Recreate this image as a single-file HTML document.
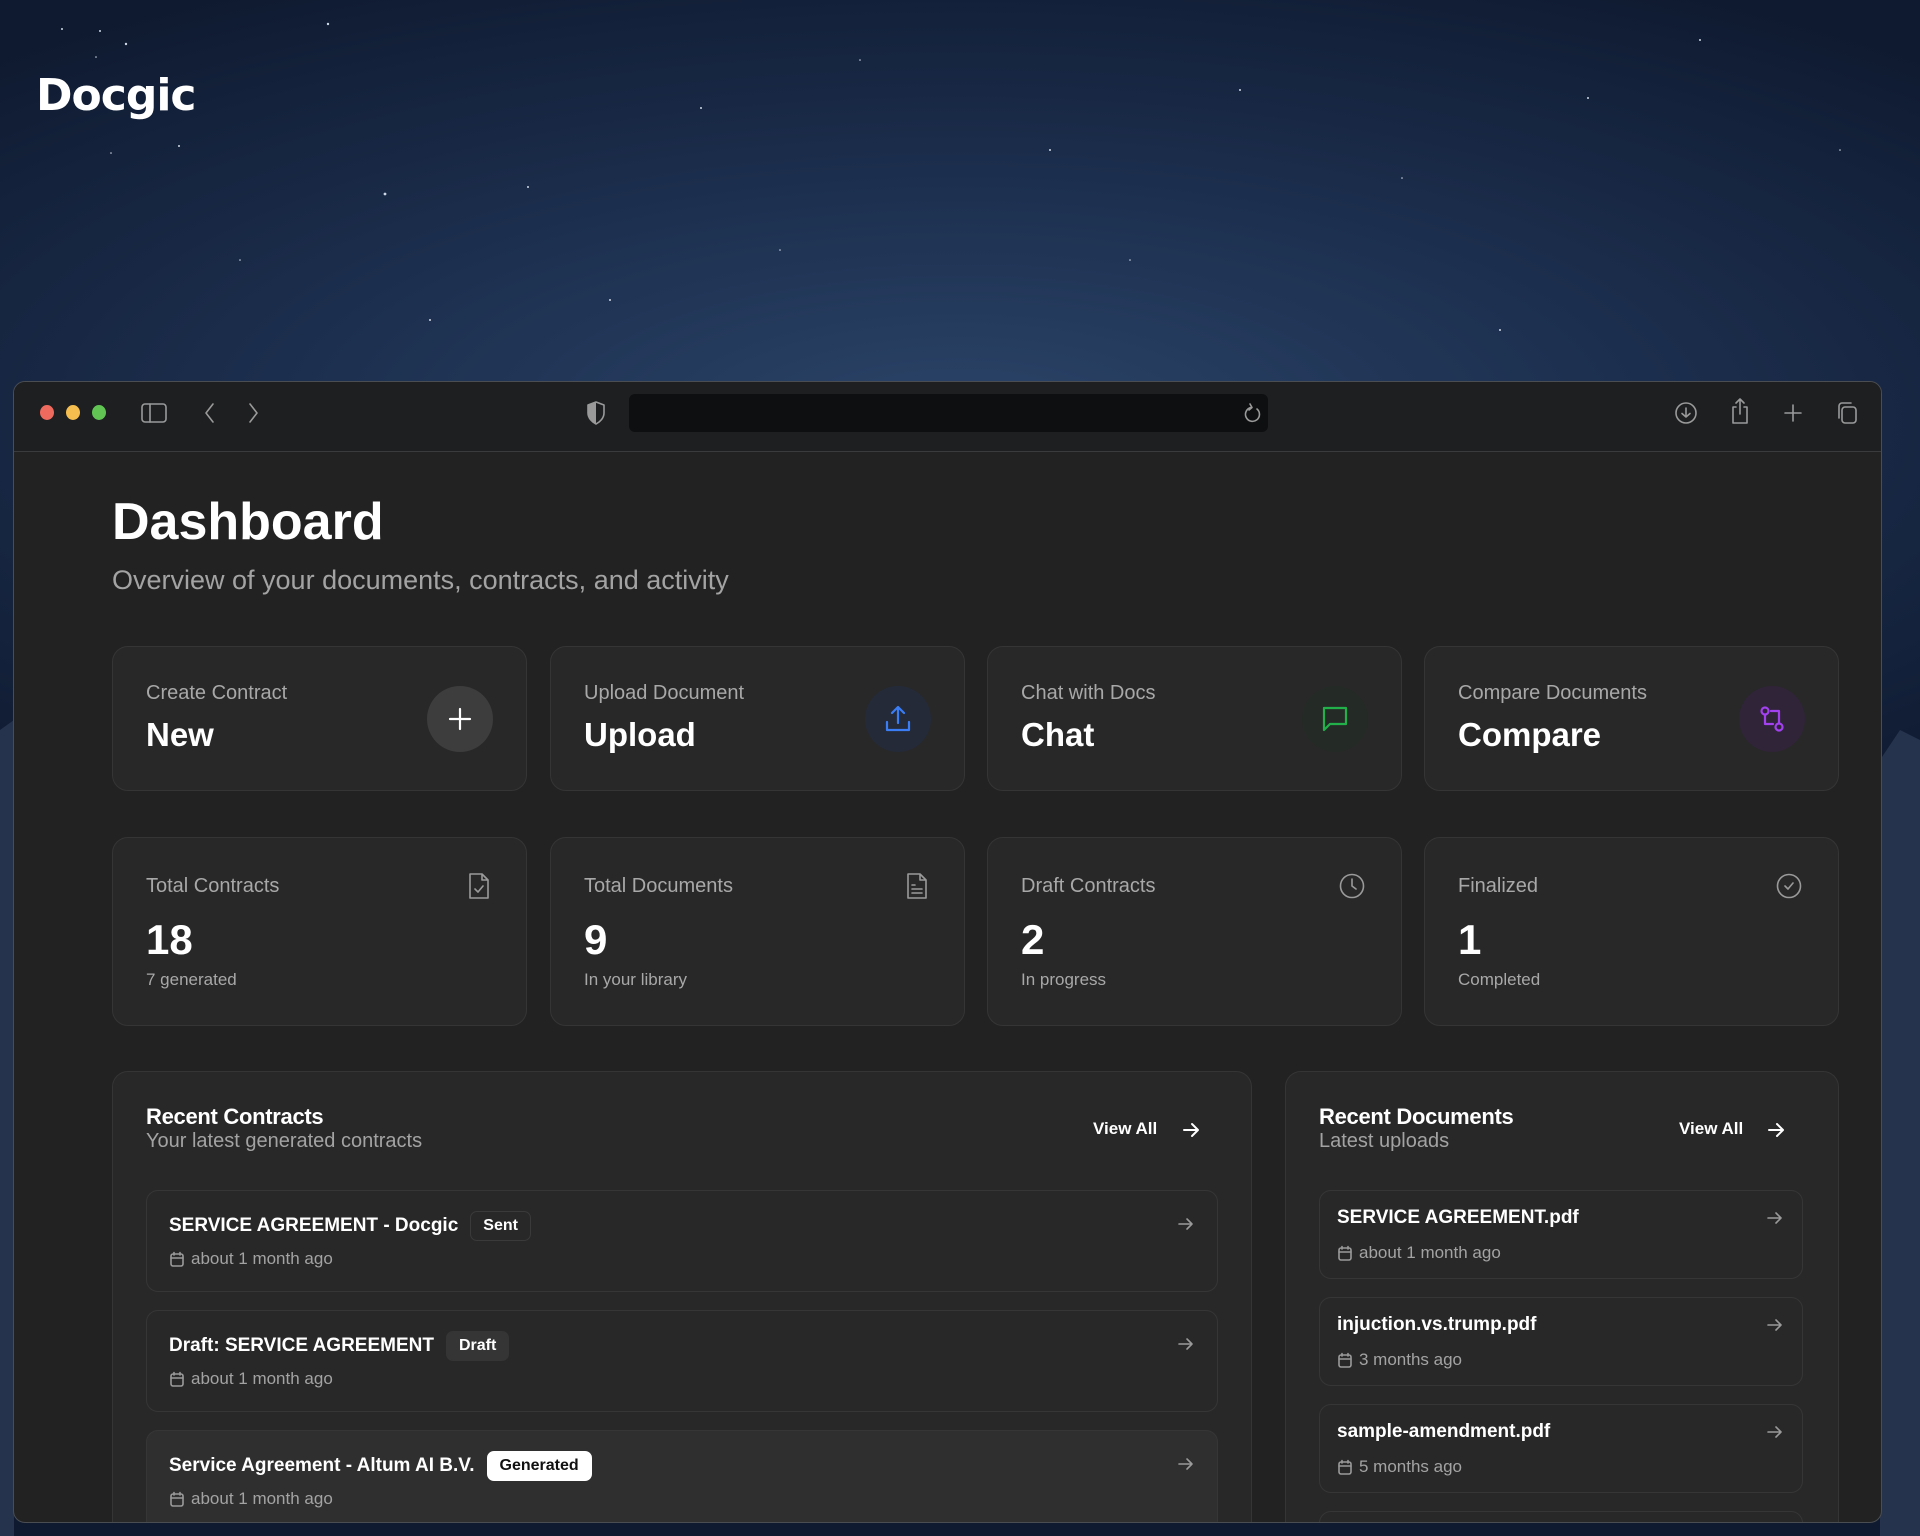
<!DOCTYPE html>
<html><head><meta charset="utf-8"><style>
*{box-sizing:border-box;margin:0;padding:0}
body{width:1920px;height:1536px;overflow:hidden;font-family:"Liberation Sans",sans-serif;position:relative;
background:radial-gradient(ellipse 1400px 500px at 50% 420px,#2b4468 0%,#1d3050 45%,#0f1a30 100%);}
.abs{position:absolute}
.logo{left:36px;top:70px;color:#fff;font-size:44px;font-weight:900;letter-spacing:-1px;font-family:"DejaVu Sans","Liberation Sans",sans-serif}
.win{left:13px;top:381px;width:1869px;height:1142px;background:#222222;border-radius:12px;border:1px solid #4a4d52;overflow:hidden}
.tb{left:0;top:0;width:100%;height:70px;background:#1d1f21;border-bottom:1px solid #3a3b3d}
.dot{width:14px;height:15px;border-radius:50%;top:23px}
.url{left:615px;top:12px;width:639px;height:38px;background:#0d0f11;border-radius:6px}
.ic{stroke:#9a9a9a;fill:none;stroke-width:1.6;stroke-linecap:round;stroke-linejoin:round}
h1{left:98px;top:110px;font-size:52px;font-weight:700;color:#fff;position:absolute}
.sub{left:98px;top:183px;font-size:27px;color:#a3a3a3}
.card{background:#282828;border:1px solid #353535;border-radius:16px;position:absolute}
.lab{font-size:20px;color:#a8a8a8;position:absolute;left:33px}
.big{font-size:33px;font-weight:700;color:#fff;position:absolute;left:33px}
.circ{position:absolute;width:66px;height:66px;border-radius:50%;left:314px;top:39px;display:flex;align-items:center;justify-content:center}
.num{font-size:42px;font-weight:700;color:#fff;position:absolute;left:33px;top:78px}
.small{font-size:17px;color:#a8a8a8;position:absolute;left:33px;top:132px}
.sicon{position:absolute;left:354px;top:34px}
.pt{font-size:22px;font-weight:700;color:#fff;position:absolute;left:33px;top:32px;letter-spacing:-0.3px}
.ps{font-size:20px;color:#a3a3a3;position:absolute;left:33px;top:58px}
.va{position:absolute;top:47px;font-size:17px;font-weight:700;color:#fff}
.item{position:absolute;background:#282828;border:1px solid #363636;border-radius:12px}
.it{position:absolute;left:22px;font-size:19px;font-weight:700;color:#fff;display:flex;align-items:center}
.badge{margin-left:12px;font-size:16px;font-weight:700;padding:5px 12px;border-radius:7px;border:1px solid #3a3a3a;color:#fff}
.dt{position:absolute;left:22px;font-size:17px;color:#a3a3a3;display:flex;align-items:center;gap:6px}
.arr{position:absolute;right:22px}
</style></head><body>
<svg class="abs" style="left:0;top:0" width="1920" height="380">
<g fill="#cfd8e6"><circle cx="62" cy="29" r="1"/><circle cx="100" cy="31" r="1"/><circle cx="126" cy="44" r="1.2"/><circle cx="96" cy="57" r=".8"/><circle cx="328" cy="24" r="1.2"/><circle cx="385" cy="194" r="1.4"/><circle cx="179" cy="146" r="1"/><circle cx="111" cy="153" r=".8"/><circle cx="528" cy="187" r="1"/><circle cx="701" cy="108" r="1"/><circle cx="860" cy="60" r=".8"/><circle cx="1050" cy="150" r="1"/><circle cx="1240" cy="90" r="1"/><circle cx="1402" cy="178" r=".8"/><circle cx="1588" cy="98" r="1"/><circle cx="1700" cy="40" r="1"/><circle cx="1840" cy="150" r=".8"/><circle cx="610" cy="300" r="1"/><circle cx="1130" cy="260" r=".8"/><circle cx="430" cy="320" r="1"/><circle cx="1500" cy="330" r="1"/><circle cx="240" cy="260" r=".8"/><circle cx="780" cy="250" r=".8"/></g>
</svg>
<svg class="abs" style="left:1880px;top:700px" width="40" height="836"><path d="M0 60 L20 30 L40 40 L40 836 L0 836Z" fill="#26334d"/></svg>
<svg class="abs" style="left:0;top:700px" width="14" height="836"><path d="M0 30 L14 20 L14 836 L0 836Z" fill="#26334d"/></svg>
<div class="abs logo">Docgic</div>
<div class="abs win">
 <div class="abs tb">
  <div class="abs dot" style="left:26px;background:#ee6a5e"></div>
  <div class="abs dot" style="left:52px;background:#f5be4f"></div>
  <div class="abs dot" style="left:78px;background:#61c554"></div>
  <svg class="abs" style="left:126px;top:19px" width="28" height="24"><rect x="2" y="3" width="24" height="18" rx="3" class="ic"/><line x1="10" y1="3" x2="10" y2="21" class="ic"/></svg>
  <svg class="abs" style="left:186px;top:18px" width="20" height="26"><path d="M13 4 L6 13 L13 22" class="ic" stroke="#aaa"/></svg>
  <svg class="abs" style="left:229px;top:18px" width="20" height="26"><path d="M7 4 L14 13 L7 22" class="ic" stroke="#555"/></svg>
  <svg class="abs" style="left:570px;top:17px" width="24" height="28"><path d="M12 3 L20 6 V14 C20 19 16 23 12 25 C8 23 4 19 4 14 V6Z" class="ic"/><path d="M12 3 L4 6 V14 C4 19 8 23 12 25Z" fill="#9a9a9a"/></svg>
  <div class="abs url"></div>
  <svg class="abs" style="left:1228px;top:20px" width="22" height="24"><path d="M15 7 A7 7 0 1 1 9 5.5" class="ic" stroke="#bbb"/><path d="M8 2 L10 5.5 L7 8" class="ic" stroke="#bbb"/></svg>
  <svg class="abs" style="left:1659px;top:18px" width="26" height="26"><circle cx="13" cy="13" r="10" class="ic"/><path d="M13 8 V17 M9 13.5 L13 17 L17 13.5" class="ic"/></svg>
  <svg class="abs" style="left:1713px;top:14px" width="26" height="30"><path d="M9 11 H6 V27 H20 V11 H17 M13 3 V18 M9 7 L13 3 L17 7" class="ic"/></svg>
  <svg class="abs" style="left:1766px;top:18px" width="26" height="26"><path d="M13 5 V21 M5 13 H21" class="ic"/></svg>
  <svg class="abs" style="left:1820px;top:17px" width="28" height="28"><rect x="8" y="8" width="14" height="16" rx="3" class="ic"/><path d="M5 19 V7 A3 3 0 0 1 8 4 H17" class="ic"/></svg>
 </div>
 <h1>Dashboard</h1>
 <div class="abs sub">Overview of your documents, contracts, and activity</div>

 <div class="card" style="left:98px;top:264px;width:415px;height:145px">
  <div class="lab" style="top:35px">Create Contract</div><div class="big" style="top:69px">New</div>
  <div class="circ" style="background:#3d3d3d"><svg width="28" height="28"><path d="M14 4 V24 M4 14 H24" stroke="#fff" stroke-width="2.2" stroke-linecap="round"/></svg></div>
 </div>
 <div class="card" style="left:536px;top:264px;width:415px;height:145px">
  <div class="lab" style="top:35px">Upload Document</div><div class="big" style="top:69px">Upload</div>
  <div class="circ" style="background:#242a38"><svg width="30" height="30"><path d="M15 3 V19 M9 9 L15 3 L21 9 M4 18 V26 H26 V18" stroke="#3b7df5" stroke-width="2.2" fill="none" stroke-linecap="round" stroke-linejoin="round"/></svg></div>
 </div>
 <div class="card" style="left:973px;top:264px;width:415px;height:145px">
  <div class="lab" style="top:35px">Chat with Docs</div><div class="big" style="top:69px">Chat</div>
  <div class="circ" style="background:#242a25"><svg width="30" height="30"><path d="M4 4 H26 V20 H10 L4 26Z" stroke="#22b04b" stroke-width="2.2" fill="none" stroke-linejoin="round"/></svg></div>
 </div>
 <div class="card" style="left:1410px;top:264px;width:415px;height:145px">
  <div class="lab" style="top:35px">Compare Documents</div><div class="big" style="top:69px">Compare</div>
  <div class="circ" style="background:#302438"><svg width="30" height="30"><circle cx="8" cy="7" r="3.5" stroke="#a340f0" stroke-width="2.2" fill="none"/><circle cx="22" cy="23" r="3.5" stroke="#a340f0" stroke-width="2.2" fill="none"/><path d="M8 10.5 V20 H16 M14 7 H22 V19.5" stroke="#a340f0" stroke-width="2.2" fill="none" stroke-linecap="round" stroke-linejoin="round"/></svg></div>
 </div>

 <div class="card" style="left:98px;top:455px;width:415px;height:189px">
  <div class="lab" style="top:37px">Total Contracts</div>
  <svg class="sicon" width="24" height="28"><path d="M3 2 H15 L21 8 V26 H3Z M15 2 V8 H21 M8 17 L11 20 L16 14" class="ic" stroke="#aaa"/></svg>
  <div class="num">18</div><div class="small">7 generated</div>
 </div>
 <div class="card" style="left:536px;top:455px;width:415px;height:189px">
  <div class="lab" style="top:37px">Total Documents</div>
  <svg class="sicon" width="24" height="28"><path d="M3 2 H15 L21 8 V26 H3Z M15 2 V8 H21 M7 13 H10 M7 17 H17 M7 21 H17" class="ic" stroke="#aaa"/></svg>
  <div class="num">9</div><div class="small">In your library</div>
 </div>
 <div class="card" style="left:973px;top:455px;width:415px;height:189px">
  <div class="lab" style="top:37px">Draft Contracts</div>
  <svg class="sicon" width="28" height="28" style="left:350px"><circle cx="14" cy="14" r="11.5" class="ic" stroke="#aaa"/><path d="M14 7 V14 L18 17" class="ic" stroke="#aaa"/></svg>
  <div class="num">2</div><div class="small">In progress</div>
 </div>
 <div class="card" style="left:1410px;top:455px;width:415px;height:189px">
  <div class="lab" style="top:37px">Finalized</div>
  <svg class="sicon" width="28" height="28" style="left:350px"><circle cx="14" cy="14" r="11.5" class="ic" stroke="#aaa"/><path d="M10 14 L13 17 L18 11" class="ic" stroke="#aaa"/></svg>
  <div class="num">1</div><div class="small">Completed</div>
 </div>

 <div class="card" style="left:98px;top:689px;width:1140px;height:500px">
  <div class="pt">Recent Contracts</div><div class="ps">Your latest generated contracts</div>
  <div class="va" style="left:980px">View All</div>
  <svg class="abs" style="left:1068px;top:48px" width="20" height="20"><path d="M3 10 H17 M11 4 L17 10 L11 16" stroke="#fff" stroke-width="2" fill="none" stroke-linecap="round" stroke-linejoin="round"/></svg>
  <div class="item" style="left:33px;top:118px;width:1072px;height:102px">
   <div class="it" style="top:20px">SERVICE AGREEMENT - Docgic<span class="badge">Sent</span></div>
   <div class="dt" style="top:58px"><svg width="16" height="16"><rect x="2" y="3" width="12" height="12" rx="2" class="ic"/><path d="M2 7 H14 M5 1.5 V4 M11 1.5 V4" class="ic"/></svg>about 1 month ago</div>
   <svg class="arr" style="top:24px" width="18" height="18"><path d="M2 9 H15 M10 4 L15 9 L10 14" class="ic" stroke="#bbb"/></svg>
  </div>
  <div class="item" style="left:33px;top:238px;width:1072px;height:102px">
   <div class="it" style="top:20px">Draft: SERVICE AGREEMENT<span class="badge" style="background:#353535;border-color:#353535">Draft</span></div>
   <div class="dt" style="top:58px"><svg width="16" height="16"><rect x="2" y="3" width="12" height="12" rx="2" class="ic"/><path d="M2 7 H14 M5 1.5 V4 M11 1.5 V4" class="ic"/></svg>about 1 month ago</div>
   <svg class="arr" style="top:24px" width="18" height="18"><path d="M2 9 H15 M10 4 L15 9 L10 14" class="ic" stroke="#bbb"/></svg>
  </div>
  <div class="item" style="left:33px;top:358px;width:1072px;height:102px;background:#2f2f2f">
   <div class="it" style="top:20px">Service Agreement - Altum AI B.V.<span class="badge" style="background:#fff;color:#111;border-color:#fff">Generated</span></div>
   <div class="dt" style="top:58px"><svg width="16" height="16"><rect x="2" y="3" width="12" height="12" rx="2" class="ic"/><path d="M2 7 H14 M5 1.5 V4 M11 1.5 V4" class="ic"/></svg>about 1 month ago</div>
   <svg class="arr" style="top:24px" width="18" height="18"><path d="M2 9 H15 M10 4 L15 9 L10 14" class="ic" stroke="#bbb"/></svg>
  </div>
 </div>

 <div class="card" style="left:1271px;top:689px;width:554px;height:500px">
  <div class="pt">Recent Documents</div><div class="ps">Latest uploads</div>
  <div class="va" style="left:393px">View All</div>
  <svg class="abs" style="left:480px;top:48px" width="20" height="20"><path d="M3 10 H17 M11 4 L17 10 L11 16" stroke="#fff" stroke-width="2" fill="none" stroke-linecap="round" stroke-linejoin="round"/></svg>
  <div class="item" style="left:33px;top:118px;width:484px;height:89px">
   <div class="it" style="top:16px;left:17px">SERVICE AGREEMENT.pdf</div>
   <div class="dt" style="top:52px;left:17px"><svg width="16" height="16"><rect x="2" y="3" width="12" height="12" rx="2" class="ic"/><path d="M2 7 H14 M5 1.5 V4 M11 1.5 V4" class="ic"/></svg>about 1 month ago</div>
   <svg class="arr" style="top:18px;right:18px" width="18" height="18"><path d="M2 9 H15 M10 4 L15 9 L10 14" class="ic" stroke="#bbb"/></svg>
  </div>
  <div class="item" style="left:33px;top:225px;width:484px;height:89px">
   <div class="it" style="top:16px;left:17px">injuction.vs.trump.pdf</div>
   <div class="dt" style="top:52px;left:17px"><svg width="16" height="16"><rect x="2" y="3" width="12" height="12" rx="2" class="ic"/><path d="M2 7 H14 M5 1.5 V4 M11 1.5 V4" class="ic"/></svg>3 months ago</div>
   <svg class="arr" style="top:18px;right:18px" width="18" height="18"><path d="M2 9 H15 M10 4 L15 9 L10 14" class="ic" stroke="#bbb"/></svg>
  </div>
  <div class="item" style="left:33px;top:332px;width:484px;height:89px">
   <div class="it" style="top:16px;left:17px">sample-amendment.pdf</div>
   <div class="dt" style="top:52px;left:17px"><svg width="16" height="16"><rect x="2" y="3" width="12" height="12" rx="2" class="ic"/><path d="M2 7 H14 M5 1.5 V4 M11 1.5 V4" class="ic"/></svg>5 months ago</div>
   <svg class="arr" style="top:18px;right:18px" width="18" height="18"><path d="M2 9 H15 M10 4 L15 9 L10 14" class="ic" stroke="#bbb"/></svg>
  </div>
  <div class="item" style="left:33px;top:439px;width:484px;height:89px"></div>
 </div>
</div>
</body></html>
